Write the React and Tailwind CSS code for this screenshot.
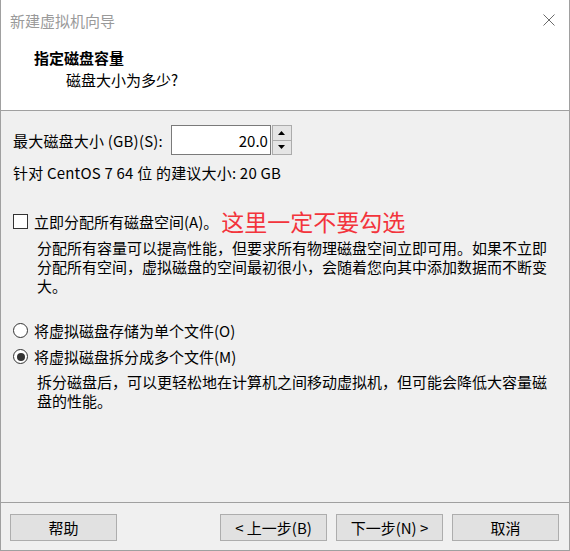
import React from "react";

function Radio({ checked }) {
  return (
    <span className="w-[15px] h-[15px] rounded-full border border-[#333] bg-white flex items-center justify-center shrink-0">
      {checked && <span className="w-[8px] h-[8px] rounded-full bg-[#333]" />}
    </span>
  );
}

function Btn({ children, className = "" }) {
  return (
    <button className={"w-[107px] h-[27px] bg-[#e1e1e1] border border-[#adadad] text-[15px] leading-none text-black " + className}>
      {children}
    </button>
  );
}

export default function App() {
  return (
    <div className="w-[570px] h-[551px] flex flex-col bg-[#f0f0f0] border-x border-b border-[#a0a0a0] text-black font-['Noto_Sans_CJK_SC',sans-serif] text-[15px] leading-[19px]">

      {/* header */}
      <div className="bg-white border-b border-[#a0a0a0] h-[111px]">
        <div className="h-[40px] flex items-center justify-between pl-[9px] pr-[14px]">
          <span className="text-[#9a9a9a]">新建虚拟机向导</span>
          <svg width="12" height="12" viewBox="0 0 12 12">
            <path d="M0.5 0.5 L11.5 11.5 M11.5 0.5 L0.5 11.5" stroke="#6b6b6b" strokeWidth="1" fill="none" />
          </svg>
        </div>
        <div className="pl-[33px] mt-[8px] font-bold">指定磁盘容量</div>
        <div className="pl-[65px] mt-[3px]">磁盘大小为多少?</div>
      </div>

      {/* body */}
      <div className="flex-1 px-[12px]">
        <div className="flex items-center mt-[14px]">
          <span className="whitespace-nowrap tracking-[0.2px]">最大磁盘大小 (GB)(S):</span>
          <div className="ml-[8px] flex">
            <div className="w-[100px] h-[30px] bg-white border border-[#7a7a7a] flex items-center justify-end pr-[2px]">
              20.0
            </div>
            <div className="flex flex-col w-[20px] h-[30px] ml-[1px]">
              <div className="flex-1 bg-[#e5e5e5] border border-[#acacac] flex items-center justify-center">
                <svg width="7" height="4" viewBox="0 0 7 4"><path d="M0 4 L3.5 0 L7 4 Z" fill="#000" /></svg>
              </div>
              <div className="flex-1 bg-[#e5e5e5] border border-[#acacac] border-t-0 flex items-center justify-center">
                <svg width="7" height="4" viewBox="0 0 7 4"><path d="M0 0 L3.5 4 L7 0 Z" fill="#000" /></svg>
              </div>
            </div>
          </div>
        </div>

        <div className="mt-[8px] tracking-[0.2px]">针对 CentOS 7 64 位 的建议大小: 20 GB</div>

        <div className="flex items-center mt-[30px]">
          <span className="w-[15px] h-[15px] border border-[#333] bg-white shrink-0" />
          <span className="ml-[6px]">立即分配所有磁盘空间(A)。</span>
          <span className="ml-[3px] text-[23px] text-[#f3343c] leading-[19px]">这里一定不要勾选</span>
        </div>
        <p className="pl-[24px] mt-[7px] pr-[8px]">
          分配所有容量可以提高性能，但要求所有物理磁盘空间立即可用。如果不立即分配所有空间，虚拟磁盘的空间最初很小，会随着您向其中添加数据而不断变大。
        </p>

        <div className="flex items-center mt-[26px]">
          <Radio />
          <span className="ml-[6px]">将虚拟磁盘存储为单个文件(O)</span>
        </div>
        <div className="flex items-center mt-[7px]">
          <Radio checked />
          <span className="ml-[6px]">将虚拟磁盘拆分成多个文件(M)</span>
        </div>
        <p className="pl-[24px] mt-[6px] pr-[8px]">
          拆分磁盘后，可以更轻松地在计算机之间移动虚拟机，但可能会降低大容量磁盘的性能。
        </p>
      </div>

      {/* footer */}
      <div className="h-[48px] border-t border-[#a0a0a0] flex items-start pt-[11px] pl-[9px] pr-[10px]">
        <Btn>帮助</Btn>
        <Btn className="ml-auto">&lt; 上一步(B)</Btn>
        <Btn className="ml-[9px]">下一步(N) &gt;</Btn>
        <Btn className="ml-[9px]">取消</Btn>
      </div>
    </div>
  );
}
